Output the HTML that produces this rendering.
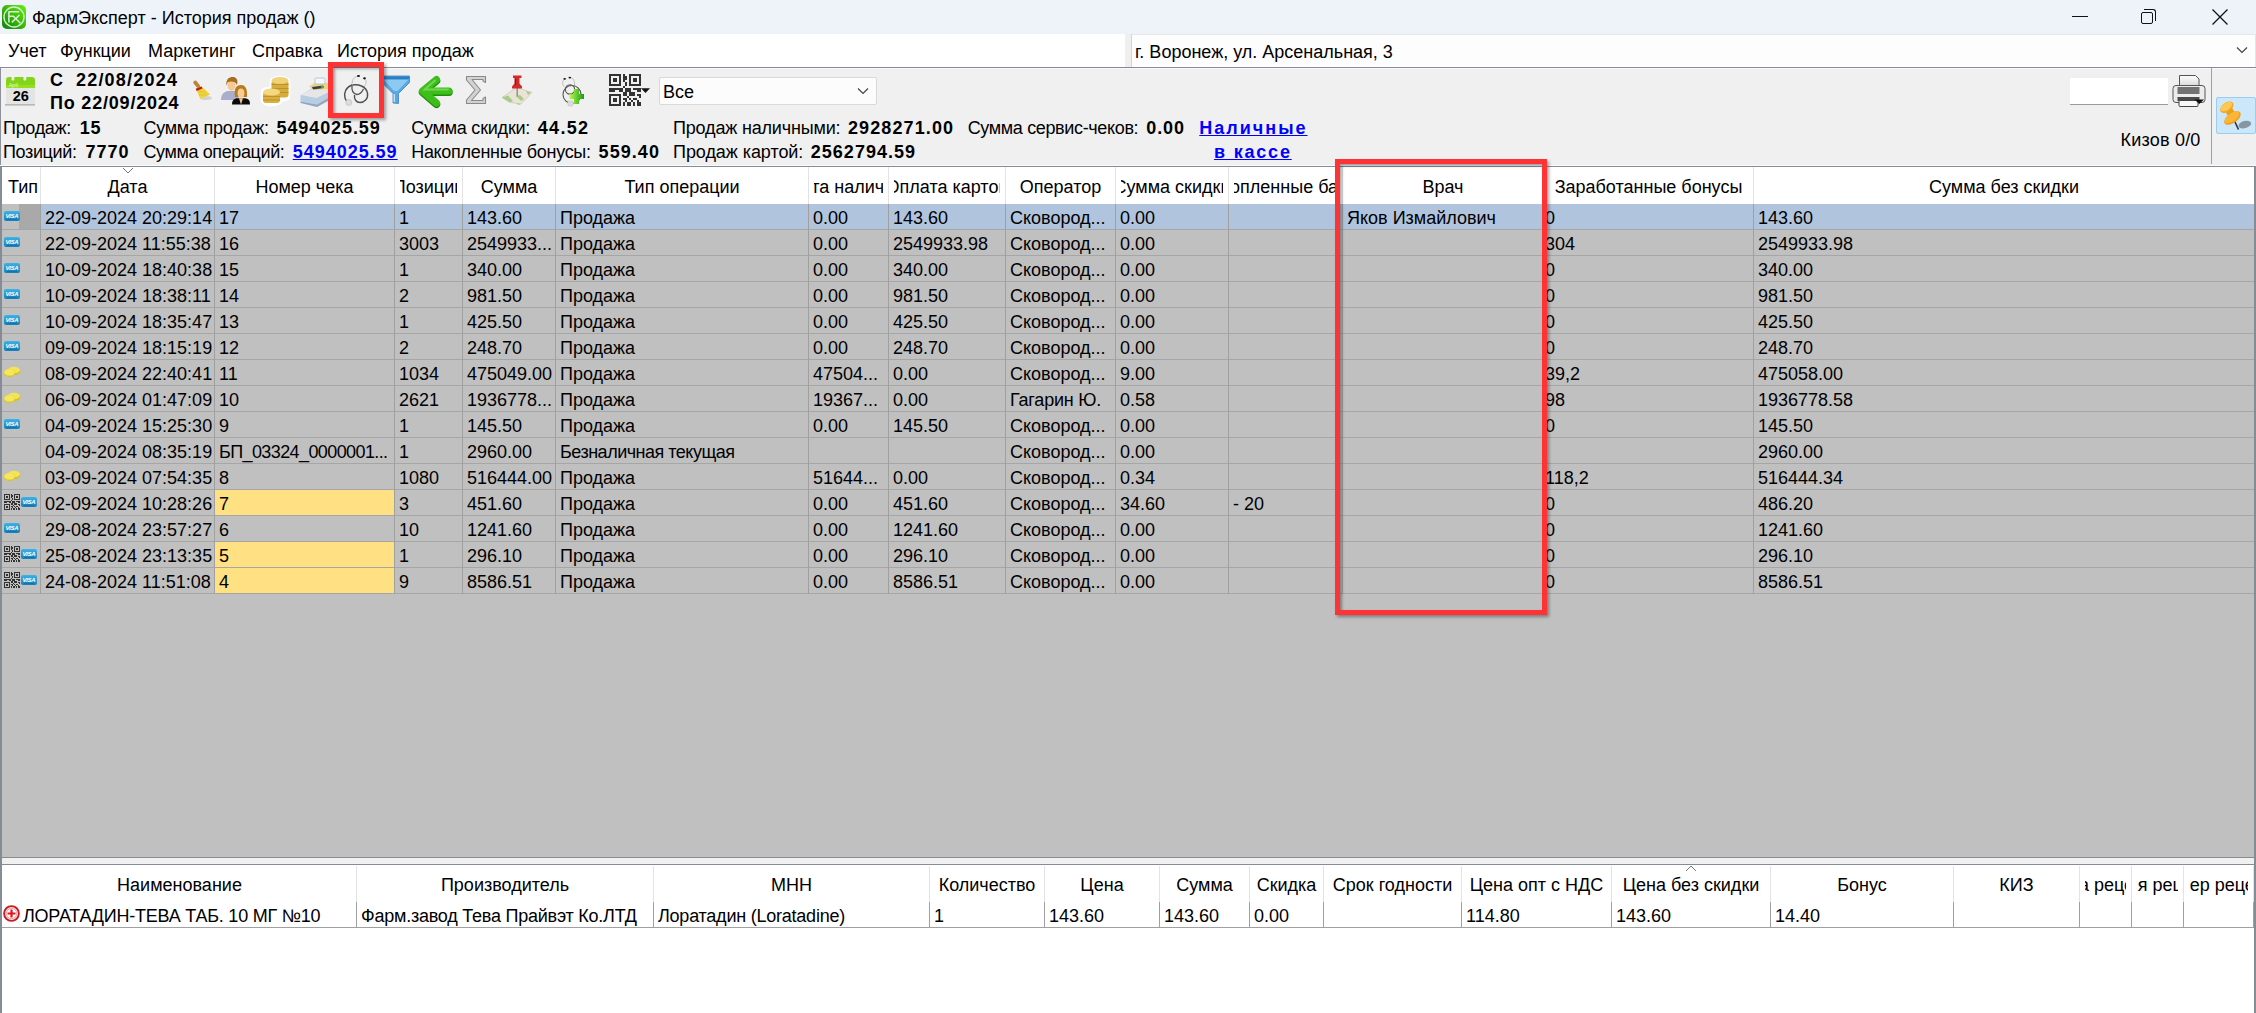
<!DOCTYPE html><html><head><meta charset="utf-8"><title>ФармЭксперт</title><style>
*{box-sizing:border-box;margin:0;padding:0}
html,body{width:2256px;height:1013px;overflow:hidden}
body{position:relative;background:#f0f0f0;font-family:"Liberation Sans",sans-serif;font-size:18px;color:#000}
.a{position:absolute}
.t{position:absolute;white-space:nowrap;line-height:20px;font-size:18px}
.b{font-weight:bold;letter-spacing:0.9px}
.lnk{color:#0000ff;font-weight:bold;text-decoration:underline;letter-spacing:0.9px}
.hl{position:absolute;height:1px}
.vl{position:absolute;width:1px}
.row{position:absolute;left:2px;width:2251px;height:26px;background:#c0c0c0}
.c{position:absolute;top:0;height:25px;overflow:hidden;white-space:nowrap;line-height:20px;padding-top:4px;padding-left:4px}
.hd{position:absolute;display:flex;justify-content:center;overflow:hidden;white-space:nowrap;line-height:20px}
</style></head><body>
<div class="a" style="left:0;top:0;width:2256px;height:34px;background:#eef3f9"></div>
<svg class="a" style="left:2px;top:5px" width="24" height="24" viewBox="0 0 24 24">
<defs><linearGradient id="gi" x1="1" y1="0" x2="0" y2="1"><stop offset="0" stop-color="#66f20c"/><stop offset="1" stop-color="#0b7f0b"/></linearGradient></defs>
<rect width="24" height="24" rx="5" fill="url(#gi)"/>
<circle cx="12" cy="12" r="10" fill="none" stroke="#d4efcc" stroke-width="1.4"/>
<path d="M6.9 17.5V6.3M6.9 6.8H17.2M6.9 11.2H11.9M9.8 17.4L17.5 10M11.6 11.5L18.4 18.3" fill="none" stroke="#dcf2d4" stroke-width="1.5"/>
</svg>
<div class="t " style="left:32px;top:8px;">ФармЭксперт - История продаж ()</div>
<div class="a" style="left:2072px;top:16px;width:16px;height:1px;background:#111"></div>
<div class="a" style="left:2141px;top:12px;width:12px;height:12px;border:1.3px solid #111;border-radius:2px"></div>
<div class="a" style="left:2144px;top:9px;width:12px;height:12px;border-top:1.3px solid #111;border-right:1.3px solid #111;border-radius:0 3px 0 0"></div>
<svg class="a" style="left:2211px;top:8px" width="18" height="18" viewBox="0 0 18 18"><path d="M1.5 1.5L16.5 16.5M16.5 1.5L1.5 16.5" stroke="#111" stroke-width="1.3"/></svg>
<div class="a" style="left:0;top:34px;width:2256px;height:33px;background:#fff"></div>
<div class="t " style="left:8px;top:41px;">Учет</div>
<div class="t " style="left:60px;top:41px;">Функции</div>
<div class="t " style="left:148px;top:41px;">Маркетинг</div>
<div class="t " style="left:252px;top:41px;">Справка</div>
<div class="t " style="left:337px;top:41px;">История продаж</div>
<div class="a" style="left:1125px;top:34px;width:6px;height:33px;background:#efefef"></div>
<div class="a" style="left:1131px;top:34px;width:1px;height:33px;background:#d4d4d4"></div>
<div class="a" style="left:1132px;top:34px;width:1124px;height:1px;background:#e6e6e6"></div>
<div class="a" style="left:2255px;top:34px;width:1px;height:33px;background:#e6e6e6"></div>
<div class="a" style="left:1132px;top:35px;width:1123px;height:31px;background:#fdfdfd"></div>
<div class="t " style="left:1135px;top:42px;">г. Воронеж, ул. Арсенальная, 3</div>
<svg class="a" style="left:2236px;top:46px" width="12" height="8" viewBox="0 0 12 8"><path d="M1 1.5L6 6.5L11 1.5" fill="none" stroke="#444" stroke-width="1.2"/></svg>
<div class="a" style="left:0;top:67px;width:2256px;height:1px;background:#868c96"></div>
<div class="a" style="left:0;top:68px;width:2256px;height:1px;background:#f8f8f8"></div>
<div class="a" style="left:0;top:68px;width:1px;height:98px;background:#8c929b"></div>
<svg class="a" style="left:5px;top:75px" width="32" height="32" viewBox="0 0 32 32">
<path d="M1 5Q1 2 4 2H27Q30 2 30 5V13H1Z" fill="#84d41a"/>
<rect x="1" y="10" width="29" height="3" fill="#94e01e"/>
<rect x="6.5" y="0.5" width="2.8" height="5" rx="1" fill="#f2f2f2"/><rect x="18.5" y="0.5" width="2.8" height="5" rx="1" fill="#f2f2f2"/>
<text x="4" y="11.5" font-family="Liberation Sans" font-size="4.5" fill="#e8ffd0">April</text>
<rect x="1" y="13" width="29" height="17" fill="#e4e4e4"/>
<rect x="0" y="29" width="30" height="1.6" fill="#b8b8b8"/>
<text x="15.8" y="26.2" font-family="Liberation Sans" font-weight="bold" font-size="14.5" text-anchor="middle" fill="#000">26</text>
</svg>
<div class="t b" style="left:50px;top:70px;">С</div>
<div class="t b" style="left:76px;top:70px;letter-spacing:1.2px">22/08/2024</div>
<div class="t b" style="left:50px;top:93px;letter-spacing:0.8px">По 22/09/2024</div>
<svg class="a" style="left:185px;top:70px" width="70" height="40" viewBox="0 0 70 40">
<ellipse cx="21" cy="28" rx="6" ry="2" fill="#000" opacity=".12"/>
<path d="M10.2 12.5L13.4 16.4" stroke="#b8863a" stroke-width="3.8" stroke-linecap="round"/>
<path d="M10.8 18.6L16.8 16.4L25.2 24.4L15.4 29Z" fill="#efd43a"/>
<path d="M13 21L21 22.5M14 25L22.5 25" stroke="#d8b820" stroke-width=".6"/>
<path d="M10.8 18.8L16.6 16.6L17.4 18.6L11.6 21Z" fill="#c4161c"/>
<path d="M36 30C36 23.5 40 21 44 21H49C52 21 53.5 23 53.5 30Z" fill="#a9aecb"/>
<ellipse cx="46.5" cy="15.5" rx="3.9" ry="5.2" fill="#f6c896"/>
<path d="M41.5 15.5C40.5 8 45.5 6.5 48.5 7C52 7.5 53.5 11 51.8 15C50.5 11.5 46.5 11 42.8 12.2Z" fill="#a86e1c"/>
<path d="M50 27C48.5 17.5 52 15 56 15C60 15 62.5 18 62 27Z" fill="#b87c1a"/>
<ellipse cx="56" cy="23.2" rx="3.4" ry="4.6" fill="#f8cc98"/>
<path d="M47 34.5C47 29.5 50 28.3 53 28.3H59C62.5 28.3 65 29.5 65 34.5Z" fill="#0a0a0a"/>
<path d="M54 28.3L56 34.5L58 28.3Z" fill="#f3c48e"/>
</svg>
<svg class="a" style="left:255px;top:70px" width="74" height="40" viewBox="0 0 74 40">
<path d="M16 11C16 6 34 6 34 11V27C34 29 31 30 27 30.5C25 34.5 21 35 16.5 35C11 35 7 33 7 30V22C7 19 11 18 16 18.5Z" fill="#fff" stroke="#fff" stroke-width="2.5" stroke-linejoin="round"/>
<rect x="16.5" y="10.5" width="17" height="17" rx="3" fill="#d6ac3c"/>
<path d="M16.5 14.5H33.5M16.5 18.5H33.5M16.5 22.5H33.5" stroke="#b88a24" stroke-width=".8"/>
<ellipse cx="25" cy="10.5" rx="8.5" ry="3.6" fill="#f0d378"/>
<rect x="8" y="22" width="17" height="11" rx="3" fill="#dab040"/>
<path d="M8 26.5H25M8 30H25" stroke="#b88a24" stroke-width=".8"/>
<ellipse cx="16.5" cy="22" rx="8.5" ry="3.6" fill="#f4d880"/>
<path d="M45.5 25.5L58 17.5L73 18V28L62 34.5L45.5 31.5Z" fill="#b8cde2"/>
<path d="M45.5 31.5L62 34.5L73 28V31L62 37L45.5 33Z" fill="#8ea8c4"/>
<path d="M46 25L58 18.5L73 19L73 22.5L61.5 28Z" fill="#e6e6e6"/>
<path d="M54 16.5L60 12.5L73 13V19L60 20Z" fill="#ecd482"/>
<rect x="60" y="8" width="10" height="6" rx="1" fill="#f4f7fb" stroke="#9fb4cc" stroke-width=".7"/>
<path d="M57 17L68 15.5L69 18L58 19.5Z" fill="#3b3f4a"/>
<rect x="66" y="16" width="3" height="2" fill="#4aa84a"/>
</svg>
<svg class="a" style="left:336px;top:70px" width="40" height="40" viewBox="0 0 40 40">
<path d="M22 6C17 7 16 11 16 15M28.5 8.5C31 11 30.5 14 28 17" fill="none" stroke="#b8b8b8" stroke-width=".9"/>
<path d="M16 15C15.5 20 17 24 21 24.5C24 24.5 26 22 27.5 19" fill="none" stroke="#555" stroke-width="1.3"/>
<path d="M16.5 15C22 14 30 16 31.5 23C32.5 29 28 32.5 24 32.5C20 32.5 18 29 18.5 25" fill="none" stroke="#505050" stroke-width="1.4"/>
<path d="M16 15C10 17 7.5 23 9 28C9.5 30 10.5 31 12 31.5" fill="none" stroke="#505050" stroke-width="1.4"/>
<ellipse cx="22.5" cy="6" rx="1.5" ry="1" fill="#111"/><ellipse cx="28.5" cy="8.3" rx="1.4" ry="1.1" fill="#111"/>
<circle cx="12.8" cy="32.5" r="3" fill="#dcdcdc" stroke="#c4c4c4" stroke-width=".8"/>
</svg>
<svg class="a" style="left:378px;top:70px" width="80" height="40" viewBox="0 0 80 40">
<path d="M5 6H31.5V12.5L20.5 23.5V33.5L15 33V23.5L5 13.5Z" fill="#5aa8e2" stroke="#3a82c0" stroke-width=".8"/>
<path d="M5 6.5H31V9H5Z" fill="#2d7fc4"/>
<path d="M6 10H30L19.5 21H16Z" fill="#8ccaf2"/>
<path d="M16.2 24V32" stroke="#d8efff" stroke-width="1.2"/>
<path d="M58.5 9.5L44.5 21L58.5 33M46 21H71" fill="none" stroke="#1e8e0c" stroke-width="7.5" stroke-linecap="round" stroke-linejoin="round" transform="translate(0 1.3)"/>
<path d="M58.5 9.5L44.5 21L58.5 33M46 21H71" fill="none" stroke="#3cbf1a" stroke-width="7" stroke-linecap="round" stroke-linejoin="round"/>
<path d="M57 10.5L46 20M48 19.5H70" fill="none" stroke="#6fd850" stroke-width="2" stroke-linecap="round"/>
</svg>
<svg class="a" style="left:460px;top:70px" width="80" height="40" viewBox="0 0 80 40">
<path d="M6.5 6.5H25.5V12.5L23 11V9.5H12L20.5 20L11.5 30.5H23V28.5L25.5 27V33.5H6.5V30L15 20L6.5 10Z" fill="#d2d2d2" stroke="#8a8a8a" stroke-width="1.1" stroke-linejoin="round"/>
<path d="M42 27.5L52 20.5L57 17.5L72 22.5L61 34L50 32.5Z" fill="#e9e4d6" stroke="#c8bfa8" stroke-width=".6"/>
<path d="M42 27.5L48 25.5L53 31L50 32.5Z" fill="#a8cc8c"/><path d="M56 26L60 25L64 29L61 31Z" fill="#a8cc8c"/>
<path d="M66 21L71 22.5L68 25Z" fill="#a8cc8c"/><path d="M57 33L61 34L58 35Z" fill="#a8cc8c"/>
<path d="M57.2 18V26.5" stroke="#8c8c8c" stroke-width="1.4"/>
<path d="M53 5.5H61.5V8H59.5V13.5L62 16.5V18.5H52V16.5L54.5 13.5V8H53Z" fill="#d22a2a"/>
<path d="M55.5 8.5V15" stroke="#9c1010" stroke-width="1.2"/>
</svg>
<svg class="a" style="left:555px;top:70px" width="100" height="40" viewBox="0 0 100 40"><path d="M9.5 9C7 11 7 15 9.5 17M15 7.6C18 8 19.5 10 19.5 13V18" fill="none" stroke="#b4b4b4" stroke-width=".8"/><circle cx="15" cy="19.5" r="4.6" fill="none" stroke="#555" stroke-width="1.1"/><circle cx="17" cy="24.5" r="9" fill="none" stroke="#555" stroke-width="1.1"/><ellipse cx="9.7" cy="8.8" rx="1.3" ry=".9" fill="#111"/><ellipse cx="14.8" cy="7.6" rx="1.3" ry=".9" fill="#111"/><circle cx="15.5" cy="33.5" r="2.8" fill="#dcdcdc" stroke="#c6c6c6" stroke-width=".7"/><defs><linearGradient id="gpl" x1="0" y1="0" x2="1" y2="0"><stop offset="0" stop-color="#b6f84a"/><stop offset="1" stop-color="#14a014"/></linearGradient></defs><path d="M19 19H24V24H29V29H24V34H19V29H14.5V24H19Z" fill="url(#gpl)"/><g fill="#333"><rect x="54" y="4" width="2" height="2"/><rect x="56" y="4" width="2" height="2"/><rect x="58" y="4" width="2" height="2"/><rect x="60" y="4" width="2" height="2"/><rect x="62" y="4" width="2" height="2"/><rect x="64" y="4" width="2" height="2"/><rect x="68" y="4" width="2" height="2"/><rect x="74" y="4" width="2" height="2"/><rect x="76" y="4" width="2" height="2"/><rect x="78" y="4" width="2" height="2"/><rect x="80" y="4" width="2" height="2"/><rect x="82" y="4" width="2" height="2"/><rect x="84" y="4" width="2" height="2"/><rect x="54" y="6" width="2" height="2"/><rect x="64" y="6" width="2" height="2"/><rect x="68" y="6" width="2" height="2"/><rect x="70" y="6" width="2" height="2"/><rect x="74" y="6" width="2" height="2"/><rect x="84" y="6" width="2" height="2"/><rect x="54" y="8" width="2" height="2"/><rect x="58" y="8" width="2" height="2"/><rect x="60" y="8" width="2" height="2"/><rect x="64" y="8" width="2" height="2"/><rect x="68" y="8" width="2" height="2"/><rect x="70" y="8" width="2" height="2"/><rect x="74" y="8" width="2" height="2"/><rect x="78" y="8" width="2" height="2"/><rect x="80" y="8" width="2" height="2"/><rect x="84" y="8" width="2" height="2"/><rect x="54" y="10" width="2" height="2"/><rect x="58" y="10" width="2" height="2"/><rect x="60" y="10" width="2" height="2"/><rect x="64" y="10" width="2" height="2"/><rect x="68" y="10" width="2" height="2"/><rect x="74" y="10" width="2" height="2"/><rect x="78" y="10" width="2" height="2"/><rect x="80" y="10" width="2" height="2"/><rect x="84" y="10" width="2" height="2"/><rect x="54" y="12" width="2" height="2"/><rect x="64" y="12" width="2" height="2"/><rect x="70" y="12" width="2" height="2"/><rect x="74" y="12" width="2" height="2"/><rect x="84" y="12" width="2" height="2"/><rect x="54" y="14" width="2" height="2"/><rect x="56" y="14" width="2" height="2"/><rect x="58" y="14" width="2" height="2"/><rect x="60" y="14" width="2" height="2"/><rect x="62" y="14" width="2" height="2"/><rect x="64" y="14" width="2" height="2"/><rect x="70" y="14" width="2" height="2"/><rect x="74" y="14" width="2" height="2"/><rect x="76" y="14" width="2" height="2"/><rect x="78" y="14" width="2" height="2"/><rect x="80" y="14" width="2" height="2"/><rect x="82" y="14" width="2" height="2"/><rect x="84" y="14" width="2" height="2"/><rect x="68" y="16" width="2" height="2"/><rect x="54" y="18" width="2" height="2"/><rect x="56" y="18" width="2" height="2"/><rect x="58" y="18" width="2" height="2"/><rect x="60" y="18" width="2" height="2"/><rect x="62" y="18" width="2" height="2"/><rect x="64" y="18" width="2" height="2"/><rect x="66" y="18" width="2" height="2"/><rect x="70" y="18" width="2" height="2"/><rect x="72" y="18" width="2" height="2"/><rect x="74" y="18" width="2" height="2"/><rect x="78" y="18" width="2" height="2"/><rect x="80" y="18" width="2" height="2"/><rect x="82" y="18" width="2" height="2"/><rect x="84" y="18" width="2" height="2"/><rect x="54" y="20" width="2" height="2"/><rect x="56" y="20" width="2" height="2"/><rect x="58" y="20" width="2" height="2"/><rect x="64" y="20" width="2" height="2"/><rect x="66" y="20" width="2" height="2"/><rect x="70" y="20" width="2" height="2"/><rect x="72" y="20" width="2" height="2"/><rect x="74" y="20" width="2" height="2"/><rect x="82" y="20" width="2" height="2"/><rect x="84" y="20" width="2" height="2"/><rect x="68" y="22" width="2" height="2"/><rect x="70" y="22" width="2" height="2"/><rect x="74" y="22" width="2" height="2"/><rect x="76" y="22" width="2" height="2"/><rect x="78" y="22" width="2" height="2"/><rect x="54" y="24" width="2" height="2"/><rect x="56" y="24" width="2" height="2"/><rect x="58" y="24" width="2" height="2"/><rect x="60" y="24" width="2" height="2"/><rect x="62" y="24" width="2" height="2"/><rect x="64" y="24" width="2" height="2"/><rect x="68" y="24" width="2" height="2"/><rect x="70" y="24" width="2" height="2"/><rect x="74" y="24" width="2" height="2"/><rect x="76" y="24" width="2" height="2"/><rect x="78" y="24" width="2" height="2"/><rect x="82" y="24" width="2" height="2"/><rect x="84" y="24" width="2" height="2"/><rect x="54" y="26" width="2" height="2"/><rect x="64" y="26" width="2" height="2"/><rect x="72" y="26" width="2" height="2"/><rect x="84" y="26" width="2" height="2"/><rect x="54" y="28" width="2" height="2"/><rect x="58" y="28" width="2" height="2"/><rect x="60" y="28" width="2" height="2"/><rect x="64" y="28" width="2" height="2"/><rect x="68" y="28" width="2" height="2"/><rect x="70" y="28" width="2" height="2"/><rect x="74" y="28" width="2" height="2"/><rect x="78" y="28" width="2" height="2"/><rect x="80" y="28" width="2" height="2"/><rect x="54" y="30" width="2" height="2"/><rect x="58" y="30" width="2" height="2"/><rect x="60" y="30" width="2" height="2"/><rect x="64" y="30" width="2" height="2"/><rect x="70" y="30" width="2" height="2"/><rect x="76" y="30" width="2" height="2"/><rect x="82" y="30" width="2" height="2"/><rect x="54" y="32" width="2" height="2"/><rect x="64" y="32" width="2" height="2"/><rect x="68" y="32" width="2" height="2"/><rect x="72" y="32" width="2" height="2"/><rect x="74" y="32" width="2" height="2"/><rect x="78" y="32" width="2" height="2"/><rect x="82" y="32" width="2" height="2"/><rect x="84" y="32" width="2" height="2"/><rect x="54" y="34" width="2" height="2"/><rect x="56" y="34" width="2" height="2"/><rect x="58" y="34" width="2" height="2"/><rect x="60" y="34" width="2" height="2"/><rect x="62" y="34" width="2" height="2"/><rect x="64" y="34" width="2" height="2"/><rect x="68" y="34" width="2" height="2"/><rect x="72" y="34" width="2" height="2"/><rect x="74" y="34" width="2" height="2"/><rect x="78" y="34" width="2" height="2"/><rect x="82" y="34" width="2" height="2"/><rect x="84" y="34" width="2" height="2"/></g><path d="M86 18.2H95L90.5 23Z" fill="#111"/></svg>
<div class="a" style="left:659px;top:77px;width:218px;height:28px;background:#fcfcfc;border:1px solid #d9d9d9;border-radius:2px"></div>
<div class="t " style="left:663px;top:82px;">Все</div>
<svg class="a" style="left:857px;top:87px" width="12" height="8" viewBox="0 0 12 8"><path d="M1 1.5L6 6.5L11 1.5" fill="none" stroke="#444" stroke-width="1.2"/></svg>
<div class="t " style="left:3px;top:118px;letter-spacing:-0.3px">Продаж:</div>
<div class="t b" style="left:79.7px;top:118px;letter-spacing:0.8px">15</div>
<div class="t " style="left:3px;top:142px;letter-spacing:-0.37px">Позиций:</div>
<div class="t b" style="left:85.6px;top:142px;letter-spacing:0.97px">7770</div>
<div class="t " style="left:143.4px;top:118px;letter-spacing:-0.24px">Сумма продаж:</div>
<div class="t b" style="left:276.5px;top:118px;letter-spacing:0.91px">5494025.59</div>
<div class="t " style="left:143.4px;top:142px;letter-spacing:-0.38px">Сумма операций:</div>
<div class="t lnk" style="left:292.7px;top:142px;letter-spacing:0.98px">5494025.59</div>
<div class="t " style="left:411.2px;top:118px;letter-spacing:-0.23px">Сумма скидки:</div>
<div class="t b" style="left:537.8px;top:118px;letter-spacing:1.28px">44.52</div>
<div class="t " style="left:411.2px;top:142px;letter-spacing:-0.3px">Накопленные бонусы:</div>
<div class="t b" style="left:598.6px;top:142px;letter-spacing:1.06px">559.40</div>
<div class="t " style="left:673px;top:118px;letter-spacing:-0.17px">Продаж наличными:</div>
<div class="t b" style="left:848px;top:118px;letter-spacing:1.1px">2928271.00</div>
<div class="t " style="left:673px;top:142px;letter-spacing:-0.06px">Продаж картой:</div>
<div class="t b" style="left:810.8px;top:142px;letter-spacing:1.01px">2562794.59</div>
<div class="t " style="left:967.7px;top:118px;letter-spacing:-0.35px">Сумма сервис-чеков:</div>
<div class="t b" style="left:1146.2px;top:118px;letter-spacing:0.93px">0.00</div>
<div class="t lnk" style="left:1199.3px;top:118px;letter-spacing:2.0px">Наличные</div>
<div class="t lnk" style="left:1214px;top:142px;letter-spacing:1.8px">в кассе</div>
<div class="a" style="left:2070px;top:78px;width:98px;height:27px;background:#fff;border-bottom:1px solid #9a9a9a"></div>
<svg class="a" style="left:2172px;top:74px" width="34" height="34" viewBox="0 0 34 34">
<defs><linearGradient id="gp" x1="0" y1="0" x2="0" y2="1"><stop offset="0" stop-color="#fdfdfd"/><stop offset="1" stop-color="#d6d6d6"/></linearGradient></defs>
<path d="M7.5 1.5H23.5L27 5V13H7.5Z" fill="url(#gp)" stroke="#555" stroke-width="1"/>
<rect x="1" y="11.5" width="32" height="17" rx="3" fill="#ececec" stroke="#555" stroke-width="1"/>
<rect x="5.5" y="13" width="22" height="7" fill="#727272"/>
<rect x="5.5" y="23" width="22" height="4" fill="#4a4a4a"/>
<rect x="7" y="26.5" width="19" height="6" rx="1" fill="#f8f8f8" stroke="#444" stroke-width="1"/>
<path d="M22.5 25.5H32L27.3 30Z" fill="#111"/>
</svg>
<div class="a" style="left:2211px;top:68px;width:1px;height:96px;background:#a0a0a0"></div>
<div class="a" style="left:2216px;top:97px;width:40px;height:37px;background:#cce6fa;border:1px solid #99cdf3;border-radius:2px"></div>
<svg class="a" style="left:2216px;top:97px" width="39" height="37" viewBox="0 0 39 37">
<ellipse cx="28.8" cy="27.6" rx="6.5" ry="3.6" transform="rotate(-15 28.8 27.6)" fill="#6f7c87" opacity="0.75"/>
<path d="M18.5 24L22.5 32.5" stroke="#2a2f4a" stroke-width="1.6"/>
<path d="M8 12L14 7L20 18L13 21Z" fill="#eaa21a"/>
<ellipse cx="16.5" cy="21" rx="9.5" ry="5" transform="rotate(-35 16.5 21)" fill="#f0a11c"/>
<ellipse cx="16" cy="20.3" rx="8.5" ry="4" transform="rotate(-35 16 20.3)" fill="#fbb63a"/>
<ellipse cx="10.8" cy="10.3" rx="7.5" ry="4.6" transform="rotate(-35 10.8 10.3)" fill="#f5a820"/>
<ellipse cx="10.4" cy="9.6" rx="6.5" ry="3.6" transform="rotate(-35 10.4 9.6)" fill="#ffc850"/>
</svg>
<div class="t " style="left:2120.6px;top:130px;letter-spacing:0.2px">Кизов 0/0</div>
<div class="a" style="left:0;top:165px;width:2256px;height:1px;background:#fafafa"></div>
<div class="a" style="left:0;top:166px;width:2256px;height:1px;background:#868c96"></div>
<div class="a" style="left:0;top:167px;width:2256px;height:690px;background:#c0c0c0"></div>
<div class="a" style="left:2px;top:167px;width:2252px;height:37px;background:#fff"></div>
<div class="hd" style="left:6px;top:177px;width:34px;height:20px">Тип</div>
<div class="hd" style="left:46px;top:177px;width:163px;height:20px">Дата</div>
<div class="vl" style="left:40px;top:167px;height:37px;background:#e3e3e3"></div>
<div class="hd" style="left:220px;top:177px;width:169px;height:20px">Номер чека</div>
<div class="vl" style="left:214px;top:167px;height:37px;background:#e3e3e3"></div>
<div class="hd" style="left:400px;top:177px;width:57px;height:20px">Позиции</div>
<div class="vl" style="left:394px;top:167px;height:37px;background:#e3e3e3"></div>
<div class="hd" style="left:468px;top:177px;width:82px;height:20px">Сумма</div>
<div class="vl" style="left:462px;top:167px;height:37px;background:#e3e3e3"></div>
<div class="hd" style="left:561px;top:177px;width:242px;height:20px">Тип операции</div>
<div class="vl" style="left:555px;top:167px;height:37px;background:#e3e3e3"></div>
<div class="hd" style="left:814px;top:177px;width:69px;height:20px">Оплата наличными</div>
<div class="vl" style="left:808px;top:167px;height:37px;background:#e3e3e3"></div>
<div class="hd" style="left:894px;top:177px;width:106px;height:20px">Оплата картой</div>
<div class="vl" style="left:888px;top:167px;height:37px;background:#e3e3e3"></div>
<div class="hd" style="left:1011px;top:177px;width:99px;height:20px">Оператор</div>
<div class="vl" style="left:1005px;top:167px;height:37px;background:#e3e3e3"></div>
<div class="hd" style="left:1121px;top:177px;width:102px;height:20px">Сумма скидки</div>
<div class="vl" style="left:1115px;top:167px;height:37px;background:#e3e3e3"></div>
<div class="hd" style="left:1234px;top:177px;width:103px;height:20px">Накопленные баллы</div>
<div class="vl" style="left:1228px;top:167px;height:37px;background:#e3e3e3"></div>
<div class="hd" style="left:1348px;top:177px;width:190px;height:20px">Врач</div>
<div class="vl" style="left:1342px;top:167px;height:37px;background:#e3e3e3"></div>
<div class="hd" style="left:1549px;top:177px;width:199px;height:20px">Заработанные бонусы</div>
<div class="vl" style="left:1543px;top:167px;height:37px;background:#e3e3e3"></div>
<div class="hd" style="left:1759px;top:177px;width:490px;height:20px">Сумма без скидки</div>
<div class="vl" style="left:1753px;top:167px;height:37px;background:#e3e3e3"></div>
<svg class="a" style="left:122px;top:167px" width="12" height="7" viewBox="0 0 12 7"><path d="M1 1L6 6L11 1" fill="none" stroke="#777" stroke-width="1"/></svg>
<div class="a" style="left:40px;top:204px;width:2214px;height:25px;background:#b0c4de"></div>
<div class="a" style="left:19px;top:204px;width:21px;height:25px;background:#a9a9a9"></div>
<svg class="a" style="left:4px;top:211px" width="16" height="10" viewBox="0 0 16 10"><defs><linearGradient id="gv" x1="0" y1="0" x2="0" y2="1"><stop offset="0" stop-color="#3db3e6"/><stop offset="1" stop-color="#137fc0"/></linearGradient></defs><rect x="0" y="0" width="16" height="10" rx="2" fill="url(#gv)"/><text x="7.8" y="6.6" font-family="Liberation Sans" font-weight="bold" font-style="italic" font-size="6" letter-spacing="-0.3" text-anchor="middle" fill="#fff">VISA</text><path d="M3 8.3H13" stroke="#0d5f90" stroke-width="0.6"/></svg>
<div class="c" style="left:41px;top:204px;width:173px;">22-09-2024 20:29:14</div>
<div class="c" style="left:215px;top:204px;width:179px;">17</div>
<div class="c" style="left:395px;top:204px;width:67px;">1</div>
<div class="c" style="left:463px;top:204px;width:92px;">143.60</div>
<div class="c" style="left:556px;top:204px;width:252px;">Продажа</div>
<div class="c" style="left:809px;top:204px;width:79px;">0.00</div>
<div class="c" style="left:889px;top:204px;width:116px;">143.60</div>
<div class="c" style="left:1006px;top:204px;width:109px;">Сковород...</div>
<div class="c" style="left:1116px;top:204px;width:112px;">0.00</div>
<div class="c" style="left:1343px;top:204px;width:200px;">Яков Измайлович</div>
<div class="c" style="left:1544px;top:204px;width:209px;padding-left:1px;">0</div>
<div class="c" style="left:1754px;top:204px;width:500px;">143.60</div>
<div class="hl" style="left:2px;top:229px;width:2252px;background:#a6a6a6"></div>
<svg class="a" style="left:4px;top:237px" width="16" height="10" viewBox="0 0 16 10"><defs><linearGradient id="gv" x1="0" y1="0" x2="0" y2="1"><stop offset="0" stop-color="#3db3e6"/><stop offset="1" stop-color="#137fc0"/></linearGradient></defs><rect x="0" y="0" width="16" height="10" rx="2" fill="url(#gv)"/><text x="7.8" y="6.6" font-family="Liberation Sans" font-weight="bold" font-style="italic" font-size="6" letter-spacing="-0.3" text-anchor="middle" fill="#fff">VISA</text><path d="M3 8.3H13" stroke="#0d5f90" stroke-width="0.6"/></svg>
<div class="c" style="left:41px;top:230px;width:173px;">22-09-2024 11:55:38</div>
<div class="c" style="left:215px;top:230px;width:179px;">16</div>
<div class="c" style="left:395px;top:230px;width:67px;">3003</div>
<div class="c" style="left:463px;top:230px;width:92px;">2549933...</div>
<div class="c" style="left:556px;top:230px;width:252px;">Продажа</div>
<div class="c" style="left:809px;top:230px;width:79px;">0.00</div>
<div class="c" style="left:889px;top:230px;width:116px;">2549933.98</div>
<div class="c" style="left:1006px;top:230px;width:109px;">Сковород...</div>
<div class="c" style="left:1116px;top:230px;width:112px;">0.00</div>
<div class="c" style="left:1544px;top:230px;width:209px;padding-left:1px;">304</div>
<div class="c" style="left:1754px;top:230px;width:500px;">2549933.98</div>
<div class="hl" style="left:2px;top:255px;width:2252px;background:#a6a6a6"></div>
<svg class="a" style="left:4px;top:263px" width="16" height="10" viewBox="0 0 16 10"><defs><linearGradient id="gv" x1="0" y1="0" x2="0" y2="1"><stop offset="0" stop-color="#3db3e6"/><stop offset="1" stop-color="#137fc0"/></linearGradient></defs><rect x="0" y="0" width="16" height="10" rx="2" fill="url(#gv)"/><text x="7.8" y="6.6" font-family="Liberation Sans" font-weight="bold" font-style="italic" font-size="6" letter-spacing="-0.3" text-anchor="middle" fill="#fff">VISA</text><path d="M3 8.3H13" stroke="#0d5f90" stroke-width="0.6"/></svg>
<div class="c" style="left:41px;top:256px;width:173px;">10-09-2024 18:40:38</div>
<div class="c" style="left:215px;top:256px;width:179px;">15</div>
<div class="c" style="left:395px;top:256px;width:67px;">1</div>
<div class="c" style="left:463px;top:256px;width:92px;">340.00</div>
<div class="c" style="left:556px;top:256px;width:252px;">Продажа</div>
<div class="c" style="left:809px;top:256px;width:79px;">0.00</div>
<div class="c" style="left:889px;top:256px;width:116px;">340.00</div>
<div class="c" style="left:1006px;top:256px;width:109px;">Сковород...</div>
<div class="c" style="left:1116px;top:256px;width:112px;">0.00</div>
<div class="c" style="left:1544px;top:256px;width:209px;padding-left:1px;">0</div>
<div class="c" style="left:1754px;top:256px;width:500px;">340.00</div>
<div class="hl" style="left:2px;top:281px;width:2252px;background:#a6a6a6"></div>
<svg class="a" style="left:4px;top:289px" width="16" height="10" viewBox="0 0 16 10"><defs><linearGradient id="gv" x1="0" y1="0" x2="0" y2="1"><stop offset="0" stop-color="#3db3e6"/><stop offset="1" stop-color="#137fc0"/></linearGradient></defs><rect x="0" y="0" width="16" height="10" rx="2" fill="url(#gv)"/><text x="7.8" y="6.6" font-family="Liberation Sans" font-weight="bold" font-style="italic" font-size="6" letter-spacing="-0.3" text-anchor="middle" fill="#fff">VISA</text><path d="M3 8.3H13" stroke="#0d5f90" stroke-width="0.6"/></svg>
<div class="c" style="left:41px;top:282px;width:173px;">10-09-2024 18:38:11</div>
<div class="c" style="left:215px;top:282px;width:179px;">14</div>
<div class="c" style="left:395px;top:282px;width:67px;">2</div>
<div class="c" style="left:463px;top:282px;width:92px;">981.50</div>
<div class="c" style="left:556px;top:282px;width:252px;">Продажа</div>
<div class="c" style="left:809px;top:282px;width:79px;">0.00</div>
<div class="c" style="left:889px;top:282px;width:116px;">981.50</div>
<div class="c" style="left:1006px;top:282px;width:109px;">Сковород...</div>
<div class="c" style="left:1116px;top:282px;width:112px;">0.00</div>
<div class="c" style="left:1544px;top:282px;width:209px;padding-left:1px;">0</div>
<div class="c" style="left:1754px;top:282px;width:500px;">981.50</div>
<div class="hl" style="left:2px;top:307px;width:2252px;background:#a6a6a6"></div>
<svg class="a" style="left:4px;top:315px" width="16" height="10" viewBox="0 0 16 10"><defs><linearGradient id="gv" x1="0" y1="0" x2="0" y2="1"><stop offset="0" stop-color="#3db3e6"/><stop offset="1" stop-color="#137fc0"/></linearGradient></defs><rect x="0" y="0" width="16" height="10" rx="2" fill="url(#gv)"/><text x="7.8" y="6.6" font-family="Liberation Sans" font-weight="bold" font-style="italic" font-size="6" letter-spacing="-0.3" text-anchor="middle" fill="#fff">VISA</text><path d="M3 8.3H13" stroke="#0d5f90" stroke-width="0.6"/></svg>
<div class="c" style="left:41px;top:308px;width:173px;">10-09-2024 18:35:47</div>
<div class="c" style="left:215px;top:308px;width:179px;">13</div>
<div class="c" style="left:395px;top:308px;width:67px;">1</div>
<div class="c" style="left:463px;top:308px;width:92px;">425.50</div>
<div class="c" style="left:556px;top:308px;width:252px;">Продажа</div>
<div class="c" style="left:809px;top:308px;width:79px;">0.00</div>
<div class="c" style="left:889px;top:308px;width:116px;">425.50</div>
<div class="c" style="left:1006px;top:308px;width:109px;">Сковород...</div>
<div class="c" style="left:1116px;top:308px;width:112px;">0.00</div>
<div class="c" style="left:1544px;top:308px;width:209px;padding-left:1px;">0</div>
<div class="c" style="left:1754px;top:308px;width:500px;">425.50</div>
<div class="hl" style="left:2px;top:333px;width:2252px;background:#a6a6a6"></div>
<svg class="a" style="left:4px;top:341px" width="16" height="10" viewBox="0 0 16 10"><defs><linearGradient id="gv" x1="0" y1="0" x2="0" y2="1"><stop offset="0" stop-color="#3db3e6"/><stop offset="1" stop-color="#137fc0"/></linearGradient></defs><rect x="0" y="0" width="16" height="10" rx="2" fill="url(#gv)"/><text x="7.8" y="6.6" font-family="Liberation Sans" font-weight="bold" font-style="italic" font-size="6" letter-spacing="-0.3" text-anchor="middle" fill="#fff">VISA</text><path d="M3 8.3H13" stroke="#0d5f90" stroke-width="0.6"/></svg>
<div class="c" style="left:41px;top:334px;width:173px;">09-09-2024 18:15:19</div>
<div class="c" style="left:215px;top:334px;width:179px;">12</div>
<div class="c" style="left:395px;top:334px;width:67px;">2</div>
<div class="c" style="left:463px;top:334px;width:92px;">248.70</div>
<div class="c" style="left:556px;top:334px;width:252px;">Продажа</div>
<div class="c" style="left:809px;top:334px;width:79px;">0.00</div>
<div class="c" style="left:889px;top:334px;width:116px;">248.70</div>
<div class="c" style="left:1006px;top:334px;width:109px;">Сковород...</div>
<div class="c" style="left:1116px;top:334px;width:112px;">0.00</div>
<div class="c" style="left:1544px;top:334px;width:209px;padding-left:1px;">0</div>
<div class="c" style="left:1754px;top:334px;width:500px;">248.70</div>
<div class="hl" style="left:2px;top:359px;width:2252px;background:#a6a6a6"></div>
<svg class="a" style="left:3px;top:366px" width="18" height="12" viewBox="0 0 18 12"><ellipse cx="11" cy="5" rx="6.5" ry="4" fill="#d8c01a"/><ellipse cx="11" cy="4" rx="6" ry="3.2" fill="#f3e457"/><ellipse cx="6.5" cy="7" rx="5.8" ry="4" fill="#dcc520"/><ellipse cx="6.5" cy="6.3" rx="5.3" ry="3.3" fill="#f6e65e"/></svg>
<div class="c" style="left:41px;top:360px;width:173px;">08-09-2024 22:40:41</div>
<div class="c" style="left:215px;top:360px;width:179px;">11</div>
<div class="c" style="left:395px;top:360px;width:67px;">1034</div>
<div class="c" style="left:463px;top:360px;width:92px;">475049.00</div>
<div class="c" style="left:556px;top:360px;width:252px;">Продажа</div>
<div class="c" style="left:809px;top:360px;width:79px;">47504...</div>
<div class="c" style="left:889px;top:360px;width:116px;">0.00</div>
<div class="c" style="left:1006px;top:360px;width:109px;">Сковород...</div>
<div class="c" style="left:1116px;top:360px;width:112px;">9.00</div>
<div class="c" style="left:1544px;top:360px;width:209px;padding-left:1px;">39,2</div>
<div class="c" style="left:1754px;top:360px;width:500px;">475058.00</div>
<div class="hl" style="left:2px;top:385px;width:2252px;background:#a6a6a6"></div>
<svg class="a" style="left:3px;top:392px" width="18" height="12" viewBox="0 0 18 12"><ellipse cx="11" cy="5" rx="6.5" ry="4" fill="#d8c01a"/><ellipse cx="11" cy="4" rx="6" ry="3.2" fill="#f3e457"/><ellipse cx="6.5" cy="7" rx="5.8" ry="4" fill="#dcc520"/><ellipse cx="6.5" cy="6.3" rx="5.3" ry="3.3" fill="#f6e65e"/></svg>
<div class="c" style="left:41px;top:386px;width:173px;">06-09-2024 01:47:09</div>
<div class="c" style="left:215px;top:386px;width:179px;">10</div>
<div class="c" style="left:395px;top:386px;width:67px;">2621</div>
<div class="c" style="left:463px;top:386px;width:92px;">1936778...</div>
<div class="c" style="left:556px;top:386px;width:252px;">Продажа</div>
<div class="c" style="left:809px;top:386px;width:79px;">19367...</div>
<div class="c" style="left:889px;top:386px;width:116px;">0.00</div>
<div class="c" style="left:1006px;top:386px;width:109px;letter-spacing:-0.2px;">Гагарин Ю.</div>
<div class="c" style="left:1116px;top:386px;width:112px;">0.58</div>
<div class="c" style="left:1544px;top:386px;width:209px;padding-left:1px;">98</div>
<div class="c" style="left:1754px;top:386px;width:500px;">1936778.58</div>
<div class="hl" style="left:2px;top:411px;width:2252px;background:#a6a6a6"></div>
<svg class="a" style="left:4px;top:419px" width="16" height="10" viewBox="0 0 16 10"><defs><linearGradient id="gv" x1="0" y1="0" x2="0" y2="1"><stop offset="0" stop-color="#3db3e6"/><stop offset="1" stop-color="#137fc0"/></linearGradient></defs><rect x="0" y="0" width="16" height="10" rx="2" fill="url(#gv)"/><text x="7.8" y="6.6" font-family="Liberation Sans" font-weight="bold" font-style="italic" font-size="6" letter-spacing="-0.3" text-anchor="middle" fill="#fff">VISA</text><path d="M3 8.3H13" stroke="#0d5f90" stroke-width="0.6"/></svg>
<div class="c" style="left:41px;top:412px;width:173px;">04-09-2024 15:25:30</div>
<div class="c" style="left:215px;top:412px;width:179px;">9</div>
<div class="c" style="left:395px;top:412px;width:67px;">1</div>
<div class="c" style="left:463px;top:412px;width:92px;">145.50</div>
<div class="c" style="left:556px;top:412px;width:252px;">Продажа</div>
<div class="c" style="left:809px;top:412px;width:79px;">0.00</div>
<div class="c" style="left:889px;top:412px;width:116px;">145.50</div>
<div class="c" style="left:1006px;top:412px;width:109px;">Сковород...</div>
<div class="c" style="left:1116px;top:412px;width:112px;">0.00</div>
<div class="c" style="left:1544px;top:412px;width:209px;padding-left:1px;">0</div>
<div class="c" style="left:1754px;top:412px;width:500px;">145.50</div>
<div class="hl" style="left:2px;top:437px;width:2252px;background:#a6a6a6"></div>
<div class="c" style="left:41px;top:438px;width:173px;">04-09-2024 08:35:19</div>
<div class="c" style="left:215px;top:438px;width:179px;letter-spacing:-0.6px;">БП_03324_0000001...</div>
<div class="c" style="left:395px;top:438px;width:67px;">1</div>
<div class="c" style="left:463px;top:438px;width:92px;">2960.00</div>
<div class="c" style="left:556px;top:438px;width:252px;letter-spacing:-0.5px;">Безналичная текущая</div>
<div class="c" style="left:1006px;top:438px;width:109px;">Сковород...</div>
<div class="c" style="left:1116px;top:438px;width:112px;">0.00</div>
<div class="c" style="left:1754px;top:438px;width:500px;">2960.00</div>
<div class="hl" style="left:2px;top:463px;width:2252px;background:#a6a6a6"></div>
<svg class="a" style="left:3px;top:470px" width="18" height="12" viewBox="0 0 18 12"><ellipse cx="11" cy="5" rx="6.5" ry="4" fill="#d8c01a"/><ellipse cx="11" cy="4" rx="6" ry="3.2" fill="#f3e457"/><ellipse cx="6.5" cy="7" rx="5.8" ry="4" fill="#dcc520"/><ellipse cx="6.5" cy="6.3" rx="5.3" ry="3.3" fill="#f6e65e"/></svg>
<div class="c" style="left:41px;top:464px;width:173px;">03-09-2024 07:54:35</div>
<div class="c" style="left:215px;top:464px;width:179px;">8</div>
<div class="c" style="left:395px;top:464px;width:67px;">1080</div>
<div class="c" style="left:463px;top:464px;width:92px;">516444.00</div>
<div class="c" style="left:556px;top:464px;width:252px;">Продажа</div>
<div class="c" style="left:809px;top:464px;width:79px;">51644...</div>
<div class="c" style="left:889px;top:464px;width:116px;">0.00</div>
<div class="c" style="left:1006px;top:464px;width:109px;">Сковород...</div>
<div class="c" style="left:1116px;top:464px;width:112px;">0.34</div>
<div class="c" style="left:1544px;top:464px;width:209px;padding-left:1px;">118,2</div>
<div class="c" style="left:1754px;top:464px;width:500px;">516444.34</div>
<div class="hl" style="left:2px;top:489px;width:2252px;background:#a6a6a6"></div>
<div class="a" style="left:215px;top:490px;width:179px;height:25px;background:#ffe083"></div>
<svg class="a" style="left:4px;top:494px" width="16" height="16" viewBox="0 0 16 16"><g fill="#333"><rect x="0" y="0" width="1" height="1"/><rect x="1" y="0" width="1" height="1"/><rect x="2" y="0" width="1" height="1"/><rect x="3" y="0" width="1" height="1"/><rect x="4" y="0" width="1" height="1"/><rect x="5" y="0" width="1" height="1"/><rect x="7" y="0" width="1" height="1"/><rect x="10" y="0" width="1" height="1"/><rect x="11" y="0" width="1" height="1"/><rect x="12" y="0" width="1" height="1"/><rect x="13" y="0" width="1" height="1"/><rect x="14" y="0" width="1" height="1"/><rect x="15" y="0" width="1" height="1"/><rect x="0" y="1" width="1" height="1"/><rect x="5" y="1" width="1" height="1"/><rect x="7" y="1" width="1" height="1"/><rect x="8" y="1" width="1" height="1"/><rect x="10" y="1" width="1" height="1"/><rect x="15" y="1" width="1" height="1"/><rect x="0" y="2" width="1" height="1"/><rect x="2" y="2" width="1" height="1"/><rect x="3" y="2" width="1" height="1"/><rect x="5" y="2" width="1" height="1"/><rect x="7" y="2" width="1" height="1"/><rect x="8" y="2" width="1" height="1"/><rect x="10" y="2" width="1" height="1"/><rect x="12" y="2" width="1" height="1"/><rect x="13" y="2" width="1" height="1"/><rect x="15" y="2" width="1" height="1"/><rect x="0" y="3" width="1" height="1"/><rect x="2" y="3" width="1" height="1"/><rect x="3" y="3" width="1" height="1"/><rect x="5" y="3" width="1" height="1"/><rect x="7" y="3" width="1" height="1"/><rect x="10" y="3" width="1" height="1"/><rect x="12" y="3" width="1" height="1"/><rect x="13" y="3" width="1" height="1"/><rect x="15" y="3" width="1" height="1"/><rect x="0" y="4" width="1" height="1"/><rect x="5" y="4" width="1" height="1"/><rect x="8" y="4" width="1" height="1"/><rect x="10" y="4" width="1" height="1"/><rect x="15" y="4" width="1" height="1"/><rect x="0" y="5" width="1" height="1"/><rect x="1" y="5" width="1" height="1"/><rect x="2" y="5" width="1" height="1"/><rect x="3" y="5" width="1" height="1"/><rect x="4" y="5" width="1" height="1"/><rect x="5" y="5" width="1" height="1"/><rect x="8" y="5" width="1" height="1"/><rect x="10" y="5" width="1" height="1"/><rect x="11" y="5" width="1" height="1"/><rect x="12" y="5" width="1" height="1"/><rect x="13" y="5" width="1" height="1"/><rect x="14" y="5" width="1" height="1"/><rect x="15" y="5" width="1" height="1"/><rect x="7" y="6" width="1" height="1"/><rect x="0" y="7" width="1" height="1"/><rect x="1" y="7" width="1" height="1"/><rect x="2" y="7" width="1" height="1"/><rect x="3" y="7" width="1" height="1"/><rect x="4" y="7" width="1" height="1"/><rect x="5" y="7" width="1" height="1"/><rect x="6" y="7" width="1" height="1"/><rect x="8" y="7" width="1" height="1"/><rect x="9" y="7" width="1" height="1"/><rect x="10" y="7" width="1" height="1"/><rect x="12" y="7" width="1" height="1"/><rect x="13" y="7" width="1" height="1"/><rect x="14" y="7" width="1" height="1"/><rect x="15" y="7" width="1" height="1"/><rect x="0" y="8" width="1" height="1"/><rect x="1" y="8" width="1" height="1"/><rect x="2" y="8" width="1" height="1"/><rect x="5" y="8" width="1" height="1"/><rect x="6" y="8" width="1" height="1"/><rect x="8" y="8" width="1" height="1"/><rect x="9" y="8" width="1" height="1"/><rect x="10" y="8" width="1" height="1"/><rect x="14" y="8" width="1" height="1"/><rect x="15" y="8" width="1" height="1"/><rect x="7" y="9" width="1" height="1"/><rect x="8" y="9" width="1" height="1"/><rect x="10" y="9" width="1" height="1"/><rect x="11" y="9" width="1" height="1"/><rect x="12" y="9" width="1" height="1"/><rect x="0" y="10" width="1" height="1"/><rect x="1" y="10" width="1" height="1"/><rect x="2" y="10" width="1" height="1"/><rect x="3" y="10" width="1" height="1"/><rect x="4" y="10" width="1" height="1"/><rect x="5" y="10" width="1" height="1"/><rect x="7" y="10" width="1" height="1"/><rect x="8" y="10" width="1" height="1"/><rect x="10" y="10" width="1" height="1"/><rect x="11" y="10" width="1" height="1"/><rect x="12" y="10" width="1" height="1"/><rect x="14" y="10" width="1" height="1"/><rect x="15" y="10" width="1" height="1"/><rect x="0" y="11" width="1" height="1"/><rect x="5" y="11" width="1" height="1"/><rect x="9" y="11" width="1" height="1"/><rect x="15" y="11" width="1" height="1"/><rect x="0" y="12" width="1" height="1"/><rect x="2" y="12" width="1" height="1"/><rect x="3" y="12" width="1" height="1"/><rect x="5" y="12" width="1" height="1"/><rect x="7" y="12" width="1" height="1"/><rect x="8" y="12" width="1" height="1"/><rect x="10" y="12" width="1" height="1"/><rect x="12" y="12" width="1" height="1"/><rect x="13" y="12" width="1" height="1"/><rect x="0" y="13" width="1" height="1"/><rect x="2" y="13" width="1" height="1"/><rect x="3" y="13" width="1" height="1"/><rect x="5" y="13" width="1" height="1"/><rect x="8" y="13" width="1" height="1"/><rect x="11" y="13" width="1" height="1"/><rect x="14" y="13" width="1" height="1"/><rect x="0" y="14" width="1" height="1"/><rect x="5" y="14" width="1" height="1"/><rect x="7" y="14" width="1" height="1"/><rect x="9" y="14" width="1" height="1"/><rect x="10" y="14" width="1" height="1"/><rect x="12" y="14" width="1" height="1"/><rect x="14" y="14" width="1" height="1"/><rect x="15" y="14" width="1" height="1"/><rect x="0" y="15" width="1" height="1"/><rect x="1" y="15" width="1" height="1"/><rect x="2" y="15" width="1" height="1"/><rect x="3" y="15" width="1" height="1"/><rect x="4" y="15" width="1" height="1"/><rect x="5" y="15" width="1" height="1"/><rect x="7" y="15" width="1" height="1"/><rect x="9" y="15" width="1" height="1"/><rect x="10" y="15" width="1" height="1"/><rect x="12" y="15" width="1" height="1"/><rect x="14" y="15" width="1" height="1"/><rect x="15" y="15" width="1" height="1"/></g></svg>
<svg class="a" style="left:21px;top:497px" width="16" height="10" viewBox="0 0 16 10"><defs><linearGradient id="gv" x1="0" y1="0" x2="0" y2="1"><stop offset="0" stop-color="#3db3e6"/><stop offset="1" stop-color="#137fc0"/></linearGradient></defs><rect x="0" y="0" width="16" height="10" rx="2" fill="url(#gv)"/><text x="7.8" y="6.6" font-family="Liberation Sans" font-weight="bold" font-style="italic" font-size="6" letter-spacing="-0.3" text-anchor="middle" fill="#fff">VISA</text><path d="M3 8.3H13" stroke="#0d5f90" stroke-width="0.6"/></svg>
<div class="c" style="left:41px;top:490px;width:173px;">02-09-2024 10:28:26</div>
<div class="c" style="left:215px;top:490px;width:179px;">7</div>
<div class="c" style="left:395px;top:490px;width:67px;">3</div>
<div class="c" style="left:463px;top:490px;width:92px;">451.60</div>
<div class="c" style="left:556px;top:490px;width:252px;">Продажа</div>
<div class="c" style="left:809px;top:490px;width:79px;">0.00</div>
<div class="c" style="left:889px;top:490px;width:116px;">451.60</div>
<div class="c" style="left:1006px;top:490px;width:109px;">Сковород...</div>
<div class="c" style="left:1116px;top:490px;width:112px;">34.60</div>
<div class="c" style="left:1229px;top:490px;width:113px;">- 20</div>
<div class="c" style="left:1544px;top:490px;width:209px;padding-left:1px;">0</div>
<div class="c" style="left:1754px;top:490px;width:500px;">486.20</div>
<div class="hl" style="left:2px;top:515px;width:2252px;background:#a6a6a6"></div>
<svg class="a" style="left:4px;top:523px" width="16" height="10" viewBox="0 0 16 10"><defs><linearGradient id="gv" x1="0" y1="0" x2="0" y2="1"><stop offset="0" stop-color="#3db3e6"/><stop offset="1" stop-color="#137fc0"/></linearGradient></defs><rect x="0" y="0" width="16" height="10" rx="2" fill="url(#gv)"/><text x="7.8" y="6.6" font-family="Liberation Sans" font-weight="bold" font-style="italic" font-size="6" letter-spacing="-0.3" text-anchor="middle" fill="#fff">VISA</text><path d="M3 8.3H13" stroke="#0d5f90" stroke-width="0.6"/></svg>
<div class="c" style="left:41px;top:516px;width:173px;">29-08-2024 23:57:27</div>
<div class="c" style="left:215px;top:516px;width:179px;">6</div>
<div class="c" style="left:395px;top:516px;width:67px;">10</div>
<div class="c" style="left:463px;top:516px;width:92px;">1241.60</div>
<div class="c" style="left:556px;top:516px;width:252px;">Продажа</div>
<div class="c" style="left:809px;top:516px;width:79px;">0.00</div>
<div class="c" style="left:889px;top:516px;width:116px;">1241.60</div>
<div class="c" style="left:1006px;top:516px;width:109px;">Сковород...</div>
<div class="c" style="left:1116px;top:516px;width:112px;">0.00</div>
<div class="c" style="left:1544px;top:516px;width:209px;padding-left:1px;">0</div>
<div class="c" style="left:1754px;top:516px;width:500px;">1241.60</div>
<div class="hl" style="left:2px;top:541px;width:2252px;background:#a6a6a6"></div>
<div class="a" style="left:215px;top:542px;width:179px;height:25px;background:#ffe083"></div>
<svg class="a" style="left:4px;top:546px" width="16" height="16" viewBox="0 0 16 16"><g fill="#333"><rect x="0" y="0" width="1" height="1"/><rect x="1" y="0" width="1" height="1"/><rect x="2" y="0" width="1" height="1"/><rect x="3" y="0" width="1" height="1"/><rect x="4" y="0" width="1" height="1"/><rect x="5" y="0" width="1" height="1"/><rect x="7" y="0" width="1" height="1"/><rect x="10" y="0" width="1" height="1"/><rect x="11" y="0" width="1" height="1"/><rect x="12" y="0" width="1" height="1"/><rect x="13" y="0" width="1" height="1"/><rect x="14" y="0" width="1" height="1"/><rect x="15" y="0" width="1" height="1"/><rect x="0" y="1" width="1" height="1"/><rect x="5" y="1" width="1" height="1"/><rect x="7" y="1" width="1" height="1"/><rect x="8" y="1" width="1" height="1"/><rect x="10" y="1" width="1" height="1"/><rect x="15" y="1" width="1" height="1"/><rect x="0" y="2" width="1" height="1"/><rect x="2" y="2" width="1" height="1"/><rect x="3" y="2" width="1" height="1"/><rect x="5" y="2" width="1" height="1"/><rect x="7" y="2" width="1" height="1"/><rect x="8" y="2" width="1" height="1"/><rect x="10" y="2" width="1" height="1"/><rect x="12" y="2" width="1" height="1"/><rect x="13" y="2" width="1" height="1"/><rect x="15" y="2" width="1" height="1"/><rect x="0" y="3" width="1" height="1"/><rect x="2" y="3" width="1" height="1"/><rect x="3" y="3" width="1" height="1"/><rect x="5" y="3" width="1" height="1"/><rect x="7" y="3" width="1" height="1"/><rect x="10" y="3" width="1" height="1"/><rect x="12" y="3" width="1" height="1"/><rect x="13" y="3" width="1" height="1"/><rect x="15" y="3" width="1" height="1"/><rect x="0" y="4" width="1" height="1"/><rect x="5" y="4" width="1" height="1"/><rect x="8" y="4" width="1" height="1"/><rect x="10" y="4" width="1" height="1"/><rect x="15" y="4" width="1" height="1"/><rect x="0" y="5" width="1" height="1"/><rect x="1" y="5" width="1" height="1"/><rect x="2" y="5" width="1" height="1"/><rect x="3" y="5" width="1" height="1"/><rect x="4" y="5" width="1" height="1"/><rect x="5" y="5" width="1" height="1"/><rect x="8" y="5" width="1" height="1"/><rect x="10" y="5" width="1" height="1"/><rect x="11" y="5" width="1" height="1"/><rect x="12" y="5" width="1" height="1"/><rect x="13" y="5" width="1" height="1"/><rect x="14" y="5" width="1" height="1"/><rect x="15" y="5" width="1" height="1"/><rect x="7" y="6" width="1" height="1"/><rect x="0" y="7" width="1" height="1"/><rect x="1" y="7" width="1" height="1"/><rect x="2" y="7" width="1" height="1"/><rect x="3" y="7" width="1" height="1"/><rect x="4" y="7" width="1" height="1"/><rect x="5" y="7" width="1" height="1"/><rect x="6" y="7" width="1" height="1"/><rect x="8" y="7" width="1" height="1"/><rect x="9" y="7" width="1" height="1"/><rect x="10" y="7" width="1" height="1"/><rect x="12" y="7" width="1" height="1"/><rect x="13" y="7" width="1" height="1"/><rect x="14" y="7" width="1" height="1"/><rect x="15" y="7" width="1" height="1"/><rect x="0" y="8" width="1" height="1"/><rect x="1" y="8" width="1" height="1"/><rect x="2" y="8" width="1" height="1"/><rect x="5" y="8" width="1" height="1"/><rect x="6" y="8" width="1" height="1"/><rect x="8" y="8" width="1" height="1"/><rect x="9" y="8" width="1" height="1"/><rect x="10" y="8" width="1" height="1"/><rect x="14" y="8" width="1" height="1"/><rect x="15" y="8" width="1" height="1"/><rect x="7" y="9" width="1" height="1"/><rect x="8" y="9" width="1" height="1"/><rect x="10" y="9" width="1" height="1"/><rect x="11" y="9" width="1" height="1"/><rect x="12" y="9" width="1" height="1"/><rect x="0" y="10" width="1" height="1"/><rect x="1" y="10" width="1" height="1"/><rect x="2" y="10" width="1" height="1"/><rect x="3" y="10" width="1" height="1"/><rect x="4" y="10" width="1" height="1"/><rect x="5" y="10" width="1" height="1"/><rect x="7" y="10" width="1" height="1"/><rect x="8" y="10" width="1" height="1"/><rect x="10" y="10" width="1" height="1"/><rect x="11" y="10" width="1" height="1"/><rect x="12" y="10" width="1" height="1"/><rect x="14" y="10" width="1" height="1"/><rect x="15" y="10" width="1" height="1"/><rect x="0" y="11" width="1" height="1"/><rect x="5" y="11" width="1" height="1"/><rect x="9" y="11" width="1" height="1"/><rect x="15" y="11" width="1" height="1"/><rect x="0" y="12" width="1" height="1"/><rect x="2" y="12" width="1" height="1"/><rect x="3" y="12" width="1" height="1"/><rect x="5" y="12" width="1" height="1"/><rect x="7" y="12" width="1" height="1"/><rect x="8" y="12" width="1" height="1"/><rect x="10" y="12" width="1" height="1"/><rect x="12" y="12" width="1" height="1"/><rect x="13" y="12" width="1" height="1"/><rect x="0" y="13" width="1" height="1"/><rect x="2" y="13" width="1" height="1"/><rect x="3" y="13" width="1" height="1"/><rect x="5" y="13" width="1" height="1"/><rect x="8" y="13" width="1" height="1"/><rect x="11" y="13" width="1" height="1"/><rect x="14" y="13" width="1" height="1"/><rect x="0" y="14" width="1" height="1"/><rect x="5" y="14" width="1" height="1"/><rect x="7" y="14" width="1" height="1"/><rect x="9" y="14" width="1" height="1"/><rect x="10" y="14" width="1" height="1"/><rect x="12" y="14" width="1" height="1"/><rect x="14" y="14" width="1" height="1"/><rect x="15" y="14" width="1" height="1"/><rect x="0" y="15" width="1" height="1"/><rect x="1" y="15" width="1" height="1"/><rect x="2" y="15" width="1" height="1"/><rect x="3" y="15" width="1" height="1"/><rect x="4" y="15" width="1" height="1"/><rect x="5" y="15" width="1" height="1"/><rect x="7" y="15" width="1" height="1"/><rect x="9" y="15" width="1" height="1"/><rect x="10" y="15" width="1" height="1"/><rect x="12" y="15" width="1" height="1"/><rect x="14" y="15" width="1" height="1"/><rect x="15" y="15" width="1" height="1"/></g></svg>
<svg class="a" style="left:21px;top:549px" width="16" height="10" viewBox="0 0 16 10"><defs><linearGradient id="gv" x1="0" y1="0" x2="0" y2="1"><stop offset="0" stop-color="#3db3e6"/><stop offset="1" stop-color="#137fc0"/></linearGradient></defs><rect x="0" y="0" width="16" height="10" rx="2" fill="url(#gv)"/><text x="7.8" y="6.6" font-family="Liberation Sans" font-weight="bold" font-style="italic" font-size="6" letter-spacing="-0.3" text-anchor="middle" fill="#fff">VISA</text><path d="M3 8.3H13" stroke="#0d5f90" stroke-width="0.6"/></svg>
<div class="c" style="left:41px;top:542px;width:173px;">25-08-2024 23:13:35</div>
<div class="c" style="left:215px;top:542px;width:179px;">5</div>
<div class="c" style="left:395px;top:542px;width:67px;">1</div>
<div class="c" style="left:463px;top:542px;width:92px;">296.10</div>
<div class="c" style="left:556px;top:542px;width:252px;">Продажа</div>
<div class="c" style="left:809px;top:542px;width:79px;">0.00</div>
<div class="c" style="left:889px;top:542px;width:116px;">296.10</div>
<div class="c" style="left:1006px;top:542px;width:109px;">Сковород...</div>
<div class="c" style="left:1116px;top:542px;width:112px;">0.00</div>
<div class="c" style="left:1544px;top:542px;width:209px;padding-left:1px;">0</div>
<div class="c" style="left:1754px;top:542px;width:500px;">296.10</div>
<div class="hl" style="left:2px;top:567px;width:2252px;background:#a6a6a6"></div>
<div class="a" style="left:215px;top:568px;width:179px;height:25px;background:#ffe083"></div>
<svg class="a" style="left:4px;top:572px" width="16" height="16" viewBox="0 0 16 16"><g fill="#333"><rect x="0" y="0" width="1" height="1"/><rect x="1" y="0" width="1" height="1"/><rect x="2" y="0" width="1" height="1"/><rect x="3" y="0" width="1" height="1"/><rect x="4" y="0" width="1" height="1"/><rect x="5" y="0" width="1" height="1"/><rect x="7" y="0" width="1" height="1"/><rect x="10" y="0" width="1" height="1"/><rect x="11" y="0" width="1" height="1"/><rect x="12" y="0" width="1" height="1"/><rect x="13" y="0" width="1" height="1"/><rect x="14" y="0" width="1" height="1"/><rect x="15" y="0" width="1" height="1"/><rect x="0" y="1" width="1" height="1"/><rect x="5" y="1" width="1" height="1"/><rect x="7" y="1" width="1" height="1"/><rect x="8" y="1" width="1" height="1"/><rect x="10" y="1" width="1" height="1"/><rect x="15" y="1" width="1" height="1"/><rect x="0" y="2" width="1" height="1"/><rect x="2" y="2" width="1" height="1"/><rect x="3" y="2" width="1" height="1"/><rect x="5" y="2" width="1" height="1"/><rect x="7" y="2" width="1" height="1"/><rect x="8" y="2" width="1" height="1"/><rect x="10" y="2" width="1" height="1"/><rect x="12" y="2" width="1" height="1"/><rect x="13" y="2" width="1" height="1"/><rect x="15" y="2" width="1" height="1"/><rect x="0" y="3" width="1" height="1"/><rect x="2" y="3" width="1" height="1"/><rect x="3" y="3" width="1" height="1"/><rect x="5" y="3" width="1" height="1"/><rect x="7" y="3" width="1" height="1"/><rect x="10" y="3" width="1" height="1"/><rect x="12" y="3" width="1" height="1"/><rect x="13" y="3" width="1" height="1"/><rect x="15" y="3" width="1" height="1"/><rect x="0" y="4" width="1" height="1"/><rect x="5" y="4" width="1" height="1"/><rect x="8" y="4" width="1" height="1"/><rect x="10" y="4" width="1" height="1"/><rect x="15" y="4" width="1" height="1"/><rect x="0" y="5" width="1" height="1"/><rect x="1" y="5" width="1" height="1"/><rect x="2" y="5" width="1" height="1"/><rect x="3" y="5" width="1" height="1"/><rect x="4" y="5" width="1" height="1"/><rect x="5" y="5" width="1" height="1"/><rect x="8" y="5" width="1" height="1"/><rect x="10" y="5" width="1" height="1"/><rect x="11" y="5" width="1" height="1"/><rect x="12" y="5" width="1" height="1"/><rect x="13" y="5" width="1" height="1"/><rect x="14" y="5" width="1" height="1"/><rect x="15" y="5" width="1" height="1"/><rect x="7" y="6" width="1" height="1"/><rect x="0" y="7" width="1" height="1"/><rect x="1" y="7" width="1" height="1"/><rect x="2" y="7" width="1" height="1"/><rect x="3" y="7" width="1" height="1"/><rect x="4" y="7" width="1" height="1"/><rect x="5" y="7" width="1" height="1"/><rect x="6" y="7" width="1" height="1"/><rect x="8" y="7" width="1" height="1"/><rect x="9" y="7" width="1" height="1"/><rect x="10" y="7" width="1" height="1"/><rect x="12" y="7" width="1" height="1"/><rect x="13" y="7" width="1" height="1"/><rect x="14" y="7" width="1" height="1"/><rect x="15" y="7" width="1" height="1"/><rect x="0" y="8" width="1" height="1"/><rect x="1" y="8" width="1" height="1"/><rect x="2" y="8" width="1" height="1"/><rect x="5" y="8" width="1" height="1"/><rect x="6" y="8" width="1" height="1"/><rect x="8" y="8" width="1" height="1"/><rect x="9" y="8" width="1" height="1"/><rect x="10" y="8" width="1" height="1"/><rect x="14" y="8" width="1" height="1"/><rect x="15" y="8" width="1" height="1"/><rect x="7" y="9" width="1" height="1"/><rect x="8" y="9" width="1" height="1"/><rect x="10" y="9" width="1" height="1"/><rect x="11" y="9" width="1" height="1"/><rect x="12" y="9" width="1" height="1"/><rect x="0" y="10" width="1" height="1"/><rect x="1" y="10" width="1" height="1"/><rect x="2" y="10" width="1" height="1"/><rect x="3" y="10" width="1" height="1"/><rect x="4" y="10" width="1" height="1"/><rect x="5" y="10" width="1" height="1"/><rect x="7" y="10" width="1" height="1"/><rect x="8" y="10" width="1" height="1"/><rect x="10" y="10" width="1" height="1"/><rect x="11" y="10" width="1" height="1"/><rect x="12" y="10" width="1" height="1"/><rect x="14" y="10" width="1" height="1"/><rect x="15" y="10" width="1" height="1"/><rect x="0" y="11" width="1" height="1"/><rect x="5" y="11" width="1" height="1"/><rect x="9" y="11" width="1" height="1"/><rect x="15" y="11" width="1" height="1"/><rect x="0" y="12" width="1" height="1"/><rect x="2" y="12" width="1" height="1"/><rect x="3" y="12" width="1" height="1"/><rect x="5" y="12" width="1" height="1"/><rect x="7" y="12" width="1" height="1"/><rect x="8" y="12" width="1" height="1"/><rect x="10" y="12" width="1" height="1"/><rect x="12" y="12" width="1" height="1"/><rect x="13" y="12" width="1" height="1"/><rect x="0" y="13" width="1" height="1"/><rect x="2" y="13" width="1" height="1"/><rect x="3" y="13" width="1" height="1"/><rect x="5" y="13" width="1" height="1"/><rect x="8" y="13" width="1" height="1"/><rect x="11" y="13" width="1" height="1"/><rect x="14" y="13" width="1" height="1"/><rect x="0" y="14" width="1" height="1"/><rect x="5" y="14" width="1" height="1"/><rect x="7" y="14" width="1" height="1"/><rect x="9" y="14" width="1" height="1"/><rect x="10" y="14" width="1" height="1"/><rect x="12" y="14" width="1" height="1"/><rect x="14" y="14" width="1" height="1"/><rect x="15" y="14" width="1" height="1"/><rect x="0" y="15" width="1" height="1"/><rect x="1" y="15" width="1" height="1"/><rect x="2" y="15" width="1" height="1"/><rect x="3" y="15" width="1" height="1"/><rect x="4" y="15" width="1" height="1"/><rect x="5" y="15" width="1" height="1"/><rect x="7" y="15" width="1" height="1"/><rect x="9" y="15" width="1" height="1"/><rect x="10" y="15" width="1" height="1"/><rect x="12" y="15" width="1" height="1"/><rect x="14" y="15" width="1" height="1"/><rect x="15" y="15" width="1" height="1"/></g></svg>
<svg class="a" style="left:21px;top:575px" width="16" height="10" viewBox="0 0 16 10"><defs><linearGradient id="gv" x1="0" y1="0" x2="0" y2="1"><stop offset="0" stop-color="#3db3e6"/><stop offset="1" stop-color="#137fc0"/></linearGradient></defs><rect x="0" y="0" width="16" height="10" rx="2" fill="url(#gv)"/><text x="7.8" y="6.6" font-family="Liberation Sans" font-weight="bold" font-style="italic" font-size="6" letter-spacing="-0.3" text-anchor="middle" fill="#fff">VISA</text><path d="M3 8.3H13" stroke="#0d5f90" stroke-width="0.6"/></svg>
<div class="c" style="left:41px;top:568px;width:173px;">24-08-2024 11:51:08</div>
<div class="c" style="left:215px;top:568px;width:179px;">4</div>
<div class="c" style="left:395px;top:568px;width:67px;">9</div>
<div class="c" style="left:463px;top:568px;width:92px;">8586.51</div>
<div class="c" style="left:556px;top:568px;width:252px;">Продажа</div>
<div class="c" style="left:809px;top:568px;width:79px;">0.00</div>
<div class="c" style="left:889px;top:568px;width:116px;">8586.51</div>
<div class="c" style="left:1006px;top:568px;width:109px;">Сковород...</div>
<div class="c" style="left:1116px;top:568px;width:112px;">0.00</div>
<div class="c" style="left:1544px;top:568px;width:209px;padding-left:1px;">0</div>
<div class="c" style="left:1754px;top:568px;width:500px;">8586.51</div>
<div class="hl" style="left:2px;top:593px;width:2252px;background:#a6a6a6"></div>
<div class="vl" style="left:40px;top:204px;height:390px;background:#a0a0a0"></div>
<div class="vl" style="left:214px;top:204px;height:390px;background:#a0a0a0"></div>
<div class="vl" style="left:394px;top:204px;height:390px;background:#a0a0a0"></div>
<div class="vl" style="left:462px;top:204px;height:390px;background:#a0a0a0"></div>
<div class="vl" style="left:555px;top:204px;height:390px;background:#a0a0a0"></div>
<div class="vl" style="left:808px;top:204px;height:390px;background:#a0a0a0"></div>
<div class="vl" style="left:888px;top:204px;height:390px;background:#a0a0a0"></div>
<div class="vl" style="left:1005px;top:204px;height:390px;background:#a0a0a0"></div>
<div class="vl" style="left:1115px;top:204px;height:390px;background:#a0a0a0"></div>
<div class="vl" style="left:1228px;top:204px;height:390px;background:#a0a0a0"></div>
<div class="vl" style="left:1342px;top:204px;height:390px;background:#a0a0a0"></div>
<div class="vl" style="left:1543px;top:204px;height:390px;background:#a0a0a0"></div>
<div class="vl" style="left:1753px;top:204px;height:390px;background:#a0a0a0"></div>
<div class="a" style="left:0;top:167px;width:2px;height:690px;background:#868c96"></div>
<div class="a" style="left:2254px;top:167px;width:2px;height:690px;background:#868c96"></div>
<div class="a" style="left:0;top:857px;width:2256px;height:1px;background:#868c96"></div>
<div class="a" style="left:0;top:858px;width:2256px;height:6px;background:#f0f0f0"></div>
<div class="a" style="left:0;top:864px;width:2256px;height:1px;background:#868c96"></div>
<div class="a" style="left:0;top:865px;width:2256px;height:148px;background:#fff"></div>
<div class="a" style="left:0;top:858px;width:2px;height:155px;background:#868c96"></div>
<div class="hd" style="left:8px;top:875px;width:343px;height:20px">Наименование</div>
<div class="c" style="left:3px;top:902px;width:353px;padding-left:20px;letter-spacing:-0.23px">ЛОРАТАДИН-ТЕВА ТАБ. 10 МГ №10</div>
<div class="hd" style="left:362px;top:875px;width:286px;height:20px">Производитель</div>
<div class="vl" style="left:356px;top:866px;height:36px;background:#e3e3e3"></div>
<div class="vl" style="left:356px;top:902px;height:25px;background:#a0a0a0"></div>
<div class="c" style="left:357px;top:902px;width:296px;padding-left:4px;letter-spacing:-0.23px">Фарм.завод Тева Прайвэт Ко.ЛТД</div>
<div class="hd" style="left:659px;top:875px;width:265px;height:20px">МНН</div>
<div class="vl" style="left:653px;top:866px;height:36px;background:#e3e3e3"></div>
<div class="vl" style="left:653px;top:902px;height:25px;background:#a0a0a0"></div>
<div class="c" style="left:654px;top:902px;width:275px;padding-left:4px;letter-spacing:-0.23px">Лоратадин (Loratadine)</div>
<div class="hd" style="left:935px;top:875px;width:104px;height:20px">Количество</div>
<div class="vl" style="left:929px;top:866px;height:36px;background:#e3e3e3"></div>
<div class="vl" style="left:929px;top:902px;height:25px;background:#a0a0a0"></div>
<div class="c" style="left:930px;top:902px;width:114px;padding-left:4px;letter-spacing:0px">1</div>
<div class="hd" style="left:1050px;top:875px;width:104px;height:20px">Цена</div>
<div class="vl" style="left:1044px;top:866px;height:36px;background:#e3e3e3"></div>
<div class="vl" style="left:1044px;top:902px;height:25px;background:#a0a0a0"></div>
<div class="c" style="left:1045px;top:902px;width:114px;padding-left:4px;letter-spacing:0px">143.60</div>
<div class="hd" style="left:1165px;top:875px;width:79px;height:20px">Сумма</div>
<div class="vl" style="left:1159px;top:866px;height:36px;background:#e3e3e3"></div>
<div class="vl" style="left:1159px;top:902px;height:25px;background:#a0a0a0"></div>
<div class="c" style="left:1160px;top:902px;width:89px;padding-left:4px;letter-spacing:0px">143.60</div>
<div class="hd" style="left:1255px;top:875px;width:63px;height:20px">Скидка</div>
<div class="vl" style="left:1249px;top:866px;height:36px;background:#e3e3e3"></div>
<div class="vl" style="left:1249px;top:902px;height:25px;background:#a0a0a0"></div>
<div class="c" style="left:1250px;top:902px;width:73px;padding-left:4px;letter-spacing:0px">0.00</div>
<div class="hd" style="left:1329px;top:875px;width:127px;height:20px">Срок годности</div>
<div class="vl" style="left:1323px;top:866px;height:36px;background:#e3e3e3"></div>
<div class="vl" style="left:1323px;top:902px;height:25px;background:#a0a0a0"></div>
<div class="hd" style="left:1467px;top:875px;width:139px;height:20px">Цена опт с НДС</div>
<div class="vl" style="left:1461px;top:866px;height:36px;background:#e3e3e3"></div>
<div class="vl" style="left:1461px;top:902px;height:25px;background:#a0a0a0"></div>
<div class="c" style="left:1462px;top:902px;width:149px;padding-left:4px;letter-spacing:0px">114.80</div>
<div class="hd" style="left:1617px;top:875px;width:148px;height:20px">Цена без скидки</div>
<div class="vl" style="left:1611px;top:866px;height:36px;background:#e3e3e3"></div>
<div class="vl" style="left:1611px;top:902px;height:25px;background:#a0a0a0"></div>
<div class="c" style="left:1612px;top:902px;width:158px;padding-left:4px;letter-spacing:0px">143.60</div>
<div class="hd" style="left:1776px;top:875px;width:172px;height:20px">Бонус</div>
<div class="vl" style="left:1770px;top:866px;height:36px;background:#e3e3e3"></div>
<div class="vl" style="left:1770px;top:902px;height:25px;background:#a0a0a0"></div>
<div class="c" style="left:1771px;top:902px;width:182px;padding-left:4px;letter-spacing:0px">14.40</div>
<div class="hd" style="left:1959px;top:875px;width:115px;height:20px">КИЗ</div>
<div class="vl" style="left:1953px;top:866px;height:36px;background:#e3e3e3"></div>
<div class="vl" style="left:1953px;top:902px;height:25px;background:#a0a0a0"></div>
<div class="hd" style="left:2085px;top:875px;width:41px;height:20px">Дата рецепта</div>
<div class="vl" style="left:2079px;top:866px;height:36px;background:#e3e3e3"></div>
<div class="vl" style="left:2079px;top:902px;height:25px;background:#a0a0a0"></div>
<div class="hd" style="left:2137px;top:875px;width:41px;height:20px">Серия рецепта</div>
<div class="vl" style="left:2131px;top:866px;height:36px;background:#e3e3e3"></div>
<div class="vl" style="left:2131px;top:902px;height:25px;background:#a0a0a0"></div>
<div class="hd" style="left:2189px;top:875px;width:59px;height:20px">Номер рецепта</div>
<div class="vl" style="left:2183px;top:866px;height:36px;background:#e3e3e3"></div>
<div class="vl" style="left:2183px;top:902px;height:25px;background:#a0a0a0"></div>
<div class="hl" style="left:2px;top:927px;width:2251px;background:#a0a0a0"></div>
<div class="a" style="left:2253px;top:866px;width:1px;height:36px;background:#e3e3e3"></div>
<div class="a" style="left:2253px;top:902px;width:1px;height:26px;background:#a0a0a0"></div>
<div class="a" style="left:2254px;top:858px;width:2px;height:155px;background:#868c96"></div>
<svg class="a" style="left:1685px;top:865px" width="12" height="7" viewBox="0 0 12 7"><path d="M1 6L6 1L11 6" fill="none" stroke="#777" stroke-width="1"/></svg>
<svg class="a" style="left:3px;top:905px" width="17" height="17" viewBox="0 0 17 17">
<circle cx="8.5" cy="8.5" r="7.4" fill="#fbeaea" stroke="#cc1c22" stroke-width="1.9"/>
<circle cx="8.5" cy="8.5" r="5.2" fill="#fff" stroke="#e88080" stroke-width=".7"/>
<path d="M8.5 4.5V12.5M4.5 8.5H12.5" stroke="#e0161c" stroke-width="2.2"/>
</svg>
<div style="position:absolute;border:5px solid #ff3333;box-shadow:2px 2px 3px rgba(0,0,0,.35), inset 2px 2px 3px rgba(0,0,0,.35);left:328px;top:62px;width:56px;height:56px"></div>
<div style="position:absolute;border:5px solid #ff3333;box-shadow:2px 2px 3px rgba(0,0,0,.35), inset 2px 2px 3px rgba(0,0,0,.35);left:1335px;top:159px;width:212px;height:456px"></div>
</body></html>
